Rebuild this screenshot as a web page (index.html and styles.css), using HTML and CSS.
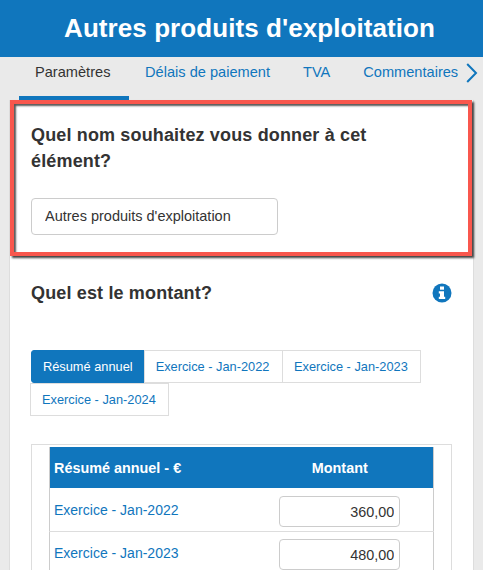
FILE: index.html
```html
<!DOCTYPE html>
<html lang="fr">
  <head>
    <meta charset="UTF-8" />
    <meta name="viewport" content="width=device-width, initial-scale=1.0" />
    <title>Autres produits d'exploitation</title>
    <link rel="stylesheet" href="styles.css">
  </head>
  <body>
    <header class="page-header">
      <h1>Autres produits d'exploitation</h1>
    </header>

    <nav class="main-tabs">
      <a class="main-tab active" href="#">Paramètres</a>
      <a class="main-tab" href="#">Délais de paiement</a>
      <a class="main-tab" href="#">TVA</a>
      <a class="main-tab" href="#">Commentaires</a>
      <svg class="tabs-next" width="12" height="20" viewBox="0 0 12 20" aria-hidden="true">
        <path d="M1.2 1 L10 10 L1.2 19" fill="none" stroke="#1076bd" stroke-width="2" />
      </svg>
    </nav>

    <main class="card">
      <section class="name-section">
        <h2>Quel nom souhaitez vous donner à cet élément?</h2>
        <input class="name-input" type="text" value="Autres produits d'exploitation">
      </section>

      <section class="amount-section">
        <div class="amount-title">
          <h2>Quel est le montant?</h2>
          <svg class="info-icon" width="20" height="20" viewBox="0 0 20 20" aria-hidden="true">
            <circle cx="10" cy="10" r="9.5" fill="#1076bd" />
            <rect x="8" y="3.5" width="4" height="3.2" fill="#fff" />
            <path d="M6.8 8.2 H12 V13.8 H13.2 V16 H6.8 V13.8 H8 V10.4 H6.8 Z" fill="#fff" />
          </svg>
        </div>

        <div class="period-tabs">
          <a class="period-tab active" href="#">Résumé annuel</a>
          <a class="period-tab" href="#">Exercice - Jan-2022</a>
          <a class="period-tab" href="#">Exercice - Jan-2023</a>
          <a class="period-tab" href="#">Exercice - Jan-2024</a>
        </div>

        <div class="table-box">
          <table class="amount-table">
            <thead>
              <tr>
                <th class="col-label">Résumé annuel - €</th>
                <th class="col-amount">Montant</th>
              </tr>
            </thead>
            <tbody>
              <tr>
                <td><a href="#">Exercice - Jan-2022</a></td>
                <td class="col-amount"><input class="amount-input" type="text" value="360,00"></td>
              </tr>
              <tr>
                <td><a href="#">Exercice - Jan-2023</a></td>
                <td class="col-amount"><input class="amount-input" type="text" value="480,00"></td>
              </tr>
            </tbody>
          </table>
        </div>
      </section>
    </main>
  </body>
</html>
```

FILE: styles.css
```css
:root {
  --blue: #1076bd;
  --text-dark: #333;
  --border-light: #ddd;
  --border-input: #ccc;
  --page-bg: #eaeaea;
  --red: #f9574d;
}
* {
  box-sizing: border-box;
  margin: 0;
  padding: 0;
}
html,
body {
  height: 100%;
  overflow: hidden;
}
body {
  font-family: "Liberation Sans", Arial, sans-serif;
  background: var(--page-bg);
  color: var(--text-dark);
  font-size: 14px;
}
a {
  color: var(--blue);
  text-decoration: none;
}
.page-header {
  background: var(--blue);
  height: 57px;
  padding-left: 16px;
  display: flex;
  align-items: center;
  justify-content: center;
}
.page-header h1 {
  color: #fff;
  font-size: 26px;
  font-weight: bold;
  letter-spacing: 0.07px;
}
.main-tabs {
  height: 43px;
  display: flex;
  padding-left: 19px;
  position: relative;
}
.main-tab {
  padding: 7px 17px 0 16px;
  font-size: 14.6px;
  line-height: 16px;
  white-space: nowrap;
}
.main-tab.active {
  color: var(--text-dark);
  border-bottom: 4px solid var(--blue);
  padding-right: 18.6px;
}
.tabs-next {
  position: absolute;
  top: 6px;
  left: 466px;
}
.card {
  margin: 0 9px;
  background: #fff;
  border: 1px solid var(--border-light);
  border-width: 0 1px;
  height: 470px;
}
h2 {
  font-size: 18px;
  line-height: 26px;
  font-weight: bold;
  letter-spacing: 0.15px;
}
.name-section {
  width: 462px;
  height: 156px;
  border: 4px solid var(--red);
  padding: 18px 17px 0;
  box-shadow: 2px 2px 2px rgba(0, 0, 0, 0.75), inset 2px 2px 2px rgba(0, 0, 0, 0.65);
}
.name-section h2 {
  max-width: 380px;
}
.name-input {
  display: block;
  width: 247px;
  height: 37px;
  margin-top: 24px;
  padding: 0 13px 2px;
  border: 1px solid var(--border-input);
  border-radius: 4px;
  font: 14.5px "Liberation Sans", Arial, sans-serif;
  color: var(--text-dark);
}
.amount-section {
  padding: 24px 22px 0 21px;
}
.amount-title {
  display: flex;
  justify-content: space-between;
  align-items: flex-start;
}
.info-icon {
  margin: 3px -1px 0 0;
}
.period-tabs {
  display: flex;
  flex-wrap: wrap;
  margin-top: 44px;
  width: 392px;
}
.period-tab {
  height: 33px;
  line-height: 31px;
  padding: 0 12.5px 0 11px;
  border: 1px solid var(--border-light);
  margin-left: -1px;
  font-size: 12.8px;
  white-space: nowrap;
}
.period-tab.active {
  background: var(--blue);
  border-color: var(--blue);
  color: #fff;
  border-radius: 3px 0 0 3px;
  margin-left: 0;
  padding: 0 11px;
}
.table-box {
  width: 421px;
  margin-top: 28px;
  padding: 2px 17px 0;
  border: 1px solid var(--border-light);
}
.amount-table {
  width: 100%;
  border-collapse: collapse;
  border-left: 1px solid var(--border-input);
  border-right: 1px solid var(--border-input);
}
.amount-table th {
  background: var(--blue);
  color: #fff;
  height: 41px;
  font-size: 14.4px;
  text-align: left;
  padding: 0 4px;
}
.amount-table th.col-amount {
  text-align: center;
}
.amount-table td {
  padding: 0 4px;
  border-bottom: 1px solid var(--border-light);
  font-size: 14px;
}
.col-amount {
  width: 187px;
}
.amount-input {
  display: block;
  width: 121px;
  height: 31px;
  margin: 7px auto 4px;
  padding: 0 5px 0 4px;
  text-align: right;
  border: 1px solid var(--border-input);
  border-radius: 4px;
  font: 14.4px "Liberation Sans", Arial, sans-serif;
  color: var(--text-dark);
}
tbody tr:first-child .amount-input {
  margin-top: 8px;
}
```
